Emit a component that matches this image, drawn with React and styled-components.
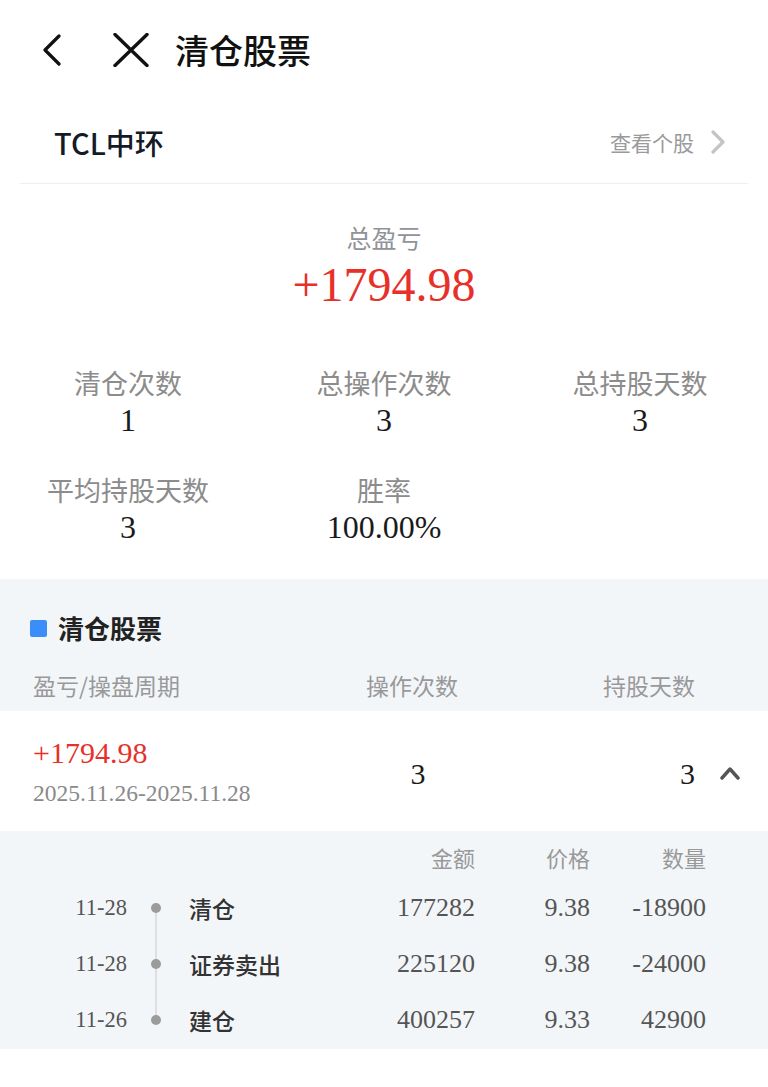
import styled, { createGlobalStyle } from "styled-components";

const GlobalStyle = createGlobalStyle`
    body{
        margin: 0;
        background: #fff;
        font-family: "Noto Sans CJK SC", "Noto Sans", sans-serif;
        color: #222;
    }
`

const cjk = `"Noto Sans CJK SC", "Noto Sans", sans-serif`
const serif = `"Liberation Serif", "Noto Sans CJK SC", serif`

const Page = styled.div`
    width: 768px;
    min-height: 1087px;
    background: #fff;
`

const Header = styled.div`
    height: 100px;
    display: flex;
    align-items: center;
    padding-left: 40px;
    svg{
        display: block;
    }
`

const IconBtn = styled.div`
    width: ${p => p.$w}px;
    margin-right: ${p => p.$gap}px;
    display: flex;
    align-items: center;
`

const Title = styled.div`
    font-family: ${cjk};
    font-size: 34px;
    font-weight: 500;
    color: #111;
    line-height: 40px;
`

const StockRow = styled.div`
    margin: 0 20px;
    height: 83px;
    display: flex;
    align-items: center;
    justify-content: space-between;
    padding: 0 22px 0 34px;
    border-bottom: 1px solid #eceef2;
`

const StockName = styled.div`
    font-family: ${cjk};
    font-size: 29px;
    font-weight: 500;
    color: #141a26;
`

const ViewLink = styled.div`
    display: flex;
    align-items: center;
    gap: 16px;
    font-family: ${cjk};
    font-size: 21px;
    color: #9a9a9a;
`

const Summary = styled.div`
    padding: 36px 0 33px;
    text-align: center;
`

const SumLabel = styled.div`
    font-family: ${cjk};
    font-size: 25px;
    line-height: 34px;
    color: #909399;
`

const BigValue = styled.div`
    font-family: ${serif};
    font-size: 48px;
    line-height: 54px;
    margin-top: 4px;
    color: #e8302a;
`

const StatsGrid = styled.div`
    margin-top: 54px;
    display: grid;
    grid-template-columns: repeat(3, 256px);
    row-gap: 34px;
`

const Stat = styled.div`
    text-align: center;
    .label{
        font-family: ${cjk};
        font-size: 27px;
        line-height: 34px;
        color: #8c8c8c;
    }
    .value{
        font-family: ${serif};
        font-size: 32px;
        line-height: 38px;
        margin-top: 1px;
        color: #1a1a1a;
    }
`

const Section = styled.div`
    background: #f3f6f9;
    padding-top: 31px;
`

const SectionTitle = styled.div`
    display: flex;
    align-items: center;
    gap: 11px;
    padding-left: 30px;
    font-family: ${cjk};
    font-size: 26px;
    font-weight: 700;
    line-height: 36px;
    color: #222;
    &::before{
        content: "";
        width: 17px;
        height: 17px;
        border-radius: 2px;
        background: #3b8ef7;
    }
`

const TableGrid = styled.div`
    display: grid;
    grid-template-columns: 299px 160px 203px 45px;
    padding-left: 33px;
    align-items: center;
`

const HeadRow = styled(TableGrid)`
    margin-top: 24px;
    padding-bottom: 11px;
    font-family: ${cjk};
    font-size: 23px;
    line-height: 30px;
    color: #999;
`

const Cell = styled.div`
    text-align: ${p => p.$align || "left"};
`

const TradeRow = styled(TableGrid)`
    background: #fff;
    height: 120px;
`

const ProfitCell = styled.div`
    .profit{
        font-family: ${serif};
        font-size: 30px;
        line-height: 36px;
        color: #e8302a;
    }
    .period{
        font-family: ${serif};
        font-size: 23.5px;
        line-height: 30px;
        margin-top: 7px;
        color: #8a8a8a;
        white-space: nowrap;
    }
`

const NumCell = styled.div`
    font-family: ${serif};
    font-size: 30px;
    text-align: ${p => p.$align || "center"};
    color: #1a1a1a;
    padding-left: ${p => p.$pl || 0}px;
    padding-top: 6px;
`

const ArrowCell = styled.div`
    display: flex;
    justify-content: flex-end;
    padding-top: 4px;
`

const Detail = styled.div`
    padding: 9px 0 1px;
    margin-top: 2px;
`

const DetailGrid = styled.div`
    display: grid;
    grid-template-columns: 52px 62px 175px 111px 115px 116px;
    padding-left: 75px;
    align-items: center;
`

const DetailHead = styled(DetailGrid)`
    font-family: ${cjk};
    font-size: 22px;
    line-height: 30px;
    color: #999;
    margin-bottom: 8px;
`

const DetailRow = styled(DetailGrid)`
    height: 56px;
`

const DateCell = styled.div`
    font-family: ${serif};
    font-size: 22.5px;
    color: #555;
    text-align: right;
    white-space: nowrap;
`

const DotCell = styled.div`
    position: relative;
    height: 100%;
    display: flex;
    align-items: center;
    padding-left: 24px;
    &::before{
        content: "";
        position: absolute;
        left: 28px;
        width: 2px;
        background: #dedfe2;
        top: ${p => (p.$first ? "50%" : "0")};
        bottom: ${p => (p.$last ? "50%" : "0")};
    }
    span{
        position: relative;
        width: 10px;
        height: 10px;
        border-radius: 50%;
        background: #9b9b9b;
    }
`

const ActionCell = styled.div`
    font-family: ${cjk};
    font-size: 23px;
    font-weight: 500;
    color: #333;
`

const AmountCell = styled.div`
    font-family: ${serif};
    font-size: 26px;
    color: #555;
    text-align: right;
`

const HeadCell = styled.div`
    text-align: right;
`

const trades = [
    { date: "11-28", action: "清仓", amount: "177282", price: "9.38", qty: "-18900" },
    { date: "11-28", action: "证券卖出", amount: "225120", price: "9.38", qty: "-24000" },
    { date: "11-26", action: "建仓", amount: "400257", price: "9.33", qty: "42900" },
]

const stats = [
    { label: "清仓次数", value: "1" },
    { label: "总操作次数", value: "3" },
    { label: "总持股天数", value: "3" },
    { label: "平均持股天数", value: "3" },
    { label: "胜率", value: "100.00%" },
]

export default function App(){
    return <Page>
        <GlobalStyle/>
        <Header>
            <IconBtn $w={24} $gap={49}>
                <svg width="24" height="32" viewBox="0 0 24 32">
                    <path d="M19 2 L5 16 L19 30" fill="none" stroke="#111" strokeWidth="3.2" strokeLinecap="round" strokeLinejoin="round"/>
                </svg>
            </IconBtn>
            <IconBtn $w={36} $gap={26}>
                <svg width="36" height="34" viewBox="0 0 36 34">
                    <path d="M2 1.5 L34 32.5 M34 1.5 L2 32.5" fill="none" stroke="#111" strokeWidth="3.4" strokeLinecap="round"/>
                </svg>
            </IconBtn>
            <Title>清仓股票</Title>
        </Header>

        <StockRow>
            <StockName>TCL中环</StockName>
            <ViewLink>
                查看个股
                <svg width="16" height="24" viewBox="0 0 16 24">
                    <path d="M3 2 L13 12 L3 22" fill="none" stroke="#c4c4c4" strokeWidth="3.2" strokeLinecap="round" strokeLinejoin="round"/>
                </svg>
            </ViewLink>
        </StockRow>

        <Summary>
            <SumLabel>总盈亏</SumLabel>
            <BigValue>+1794.98</BigValue>
            <StatsGrid>
                {stats.map(s => <Stat key={s.label}>
                    <div className="label">{s.label}</div>
                    <div className="value">{s.value}</div>
                </Stat>)}
            </StatsGrid>
        </Summary>

        <Section>
            <SectionTitle>清仓股票</SectionTitle>
            <HeadRow>
                <Cell>盈亏/操盘周期</Cell>
                <Cell $align="center">操作次数</Cell>
                <Cell $align="right">持股天数</Cell>
                <Cell/>
            </HeadRow>
            <TradeRow>
                <ProfitCell>
                    <div className="profit">+1794.98</div>
                    <div className="period">2025.11.26-2025.11.28</div>
                </ProfitCell>
                <NumCell $pl={12}>3</NumCell>
                <NumCell $align="right">3</NumCell>
                <ArrowCell>
                    <svg width="20" height="14" viewBox="0 0 20 14">
                        <path d="M2 12 L10 3 L18 12" fill="none" stroke="#555" strokeWidth="3.4" strokeLinecap="round" strokeLinejoin="round"/>
                    </svg>
                </ArrowCell>
            </TradeRow>
            <Detail>
                <DetailHead>
                    <div/><div/><div/>
                    <HeadCell>金额</HeadCell>
                    <HeadCell>价格</HeadCell>
                    <HeadCell>数量</HeadCell>
                </DetailHead>
                {trades.map((t, i) => <DetailRow key={i}>
                    <DateCell>{t.date}</DateCell>
                    <DotCell $first={i === 0} $last={i === trades.length - 1}><span/></DotCell>
                    <ActionCell>{t.action}</ActionCell>
                    <AmountCell>{t.amount}</AmountCell>
                    <AmountCell>{t.price}</AmountCell>
                    <AmountCell>{t.qty}</AmountCell>
                </DetailRow>)}
            </Detail>
        </Section>
    </Page>
}
